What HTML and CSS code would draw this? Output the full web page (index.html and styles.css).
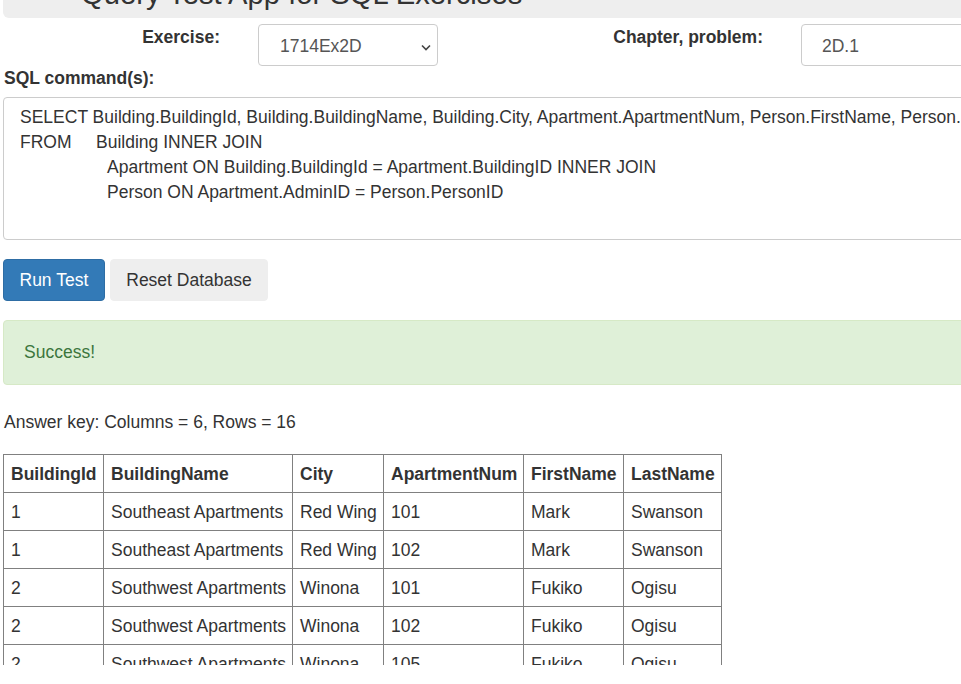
FILE: index.html
```html
<!DOCTYPE html>
<html>
<head>
<meta charset="utf-8">
<link rel="stylesheet" href="styles.css">
</head>
<body>
<div class="viewport">
  <div class="page">
    <div class="jumbo"><h1 class="title">Query Test App for SQL Exercises</h1></div>

    <div class="form-row">
      <div class="lbl lbl-ex">Exercise:</div>
      <div class="select">
        <span>1714Ex2D</span>
        <svg class="chev" width="10" height="7" viewBox="0 0 10 7"><path d="M1 1.5 L5 5.5 L9 1.5" fill="none" stroke="#444" stroke-width="1.6"/></svg>
      </div>
      <div class="lbl lbl-ch">Chapter, problem:</div>
      <div class="input">2D.1</div>
    </div>

    <div class="sql-label">SQL command(s):</div>
    <div class="textarea">
      <div class="ln">SELECT Building.BuildingId, Building.BuildingName, Building.City, Apartment.ApartmentNum, Person.FirstName, Person.LastName</div>
      <div class="ln"><span class="kw">FROM</span>Building INNER JOIN</div>
      <div class="ln ind">Apartment ON Building.BuildingId = Apartment.BuildingID INNER JOIN</div>
      <div class="ln ind">Person ON Apartment.AdminID = Person.PersonID</div>
    </div>

    <div class="buttons">
      <div class="btn btn-primary">Run Test</div>
      <div class="btn btn-default">Reset Database</div>
    </div>

    <div class="alert">Success!</div>

    <p class="answer">Answer key: Columns = 6, Rows = 16</p>

    <table class="results">
      <colgroup>
        <col class="c1"><col class="c2"><col class="c3"><col class="c4"><col class="c5"><col class="c6">
      </colgroup>
      <thead>
        <tr><th>BuildingId</th><th>BuildingName</th><th>City</th><th>ApartmentNum</th><th>FirstName</th><th>LastName</th></tr>
      </thead>
      <tbody>
        <tr><td>1</td><td>Southeast Apartments</td><td>Red Wing</td><td>101</td><td>Mark</td><td>Swanson</td></tr>
        <tr><td>1</td><td>Southeast Apartments</td><td>Red Wing</td><td>102</td><td>Mark</td><td>Swanson</td></tr>
        <tr><td>2</td><td>Southwest Apartments</td><td>Winona</td><td>101</td><td>Fukiko</td><td>Ogisu</td></tr>
        <tr><td>2</td><td>Southwest Apartments</td><td>Winona</td><td>102</td><td>Fukiko</td><td>Ogisu</td></tr>
        <tr><td>2</td><td>Southwest Apartments</td><td>Winona</td><td>105</td><td>Fukiko</td><td>Ogisu</td></tr>
        <tr><td>2</td><td>Southwest Apartments</td><td>Winona</td><td>106</td><td>Fukiko</td><td>Ogisu</td></tr>
      </tbody>
    </table>
  </div>
</div>
</body>
</html>
```

FILE: styles.css
```css
html, body {
  margin: 0;
  padding: 0;
  background: #fff;
}
body {
  font-family: "Liberation Sans", Arial, sans-serif;
  font-size: 17.5px;
  color: #333;
}
.viewport {
  width: 961px;
  height: 665px;
  overflow: hidden;
}
.page {
  width: 1300px;
  padding-left: 3px;
}
.jumbo {
  background: #eee;
  height: 18px;
  border-radius: 0 0 6px 6px;
  overflow: hidden;
}
.title {
  margin: -22px 0 0 0;
  padding-left: 78px;
  font-size: 29.2px;
  line-height: 33px;
  font-weight: normal;
  color: #333;
  white-space: nowrap;
}
.form-row {
  display: flex;
  align-items: flex-start;
  margin-top: 6px;
  height: 42px;
}
.lbl {
  font-weight: bold;
  text-align: right;
  padding-top: 2px;
  line-height: 22px;
}
.lbl-ex { width: 217px; }
.lbl-ch { width: 325px; }
.select, .input {
  box-sizing: border-box;
  height: 42px;
  border: 1px solid #ccc;
  border-radius: 4px;
  background: #fff;
  display: flex;
  align-items: center;
  color: #555;
  line-height: 22px;
  padding-top: 2px;
}
.select {
  width: 180px;
  margin-left: 38px;
  padding-left: 21px;
  padding-right: 6px;
  justify-content: space-between;
}
.chev { margin-top: 2px; }
.input {
  width: 250px;
  margin-left: 38px;
  padding-left: 20px;
}
.sql-label {
  font-weight: bold;
  margin-left: 1px;
  line-height: 24px;
}
.textarea {
  box-sizing: border-box;
  margin-top: 7px;
  height: 143px;
  width: 1200px;
  border: 1px solid #ccc;
  border-radius: 4px;
  padding: 7px 16px;
  line-height: 25px;
  white-space: nowrap;
}
.kw {
  display: inline-block;
  width: 76px;
}
.ind { padding-left: 87px; }
.buttons {
  display: flex;
  gap: 5px;
  margin-top: 19px;
}
.btn {
  box-sizing: border-box;
  height: 42px;
  line-height: 40px;
  padding: 0 15.5px;
  border: 1px solid transparent;
  border-radius: 4px;
}
.btn-primary {
  background: #337ab7;
  border-color: #2e6da4;
  color: #fff;
}
.btn-default {
  background: #eee;
  border-color: #eee;
  color: #333;
}
.alert {
  box-sizing: border-box;
  margin-top: 19px;
  height: 65px;
  width: 1200px;
  background: #dff0d8;
  border: 1px solid #d6e9c6;
  border-radius: 4px;
  color: #3c763d;
  padding: 0 20px;
  line-height: 63px;
}
.answer {
  margin: 25px 0 0 1px;
  line-height: 24px;
}
.results {
  margin-top: 20px;
  border-collapse: collapse;
  table-layout: fixed;
  width: 719px;
}
.c1 { width: 100px; }
.c2 { width: 189px; }
.c3 { width: 91px; }
.c4 { width: 140px; }
.c5 { width: 100px; }
.c6 { width: 98px; }
.results th, .results td {
  border: 1px solid #808080;
  height: 38px;
  box-sizing: border-box;
  padding: 0 7px;
  text-align: left;
  white-space: nowrap;
  line-height: 20px;
}
.results th {
  font-weight: bold;
}
```
